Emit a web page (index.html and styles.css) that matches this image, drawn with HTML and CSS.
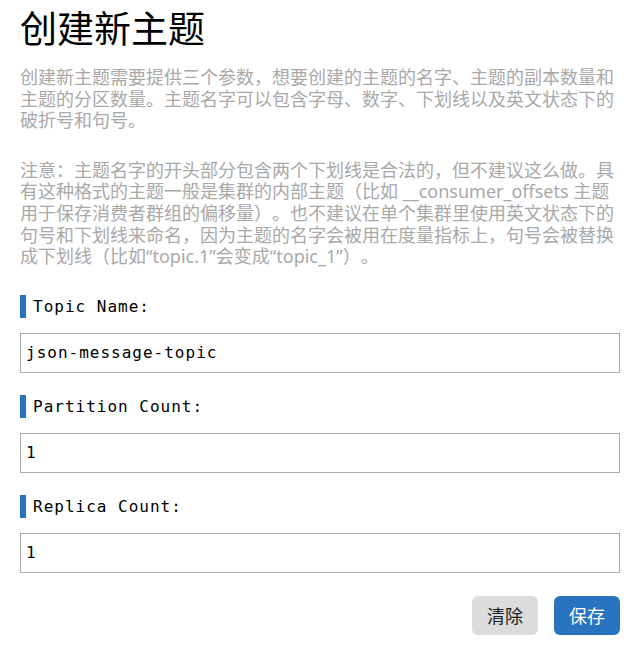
FILE: index.html
```html
<!DOCTYPE html>
<html lang="zh-CN">
<head>
<meta charset="utf-8">
<title>创建新主题</title>
<link rel="stylesheet" href="styles.css">
</head>
<body>
<div class="page">
  <h1 class="title">创建新主题</h1>
  <p class="desc">创建新主题需要提供三个参数，想要创建的主题的名字、主题的副本数量和主题的分区数量。主题名字可以包含字母、数字、下划线以及英文状态下的破折号和句号。</p>
  <p class="desc desc-note">注意：主题名字的开头部分包含两个下划线是合法的，但不建议这么做。具有这种格式的主题一般是集群的内部主题（比如 __consumer_offsets 主题用于保存消费者群组的偏移量）。也不建议在单个集群里使用英文状态下的句号和下划线来命名，因为主题的名字会被用在度量指标上，句号会被替换成下划线（比如“topic.1”会变成“topic_1”）。</p>

  <form class="form">
    <div class="field">
      <label class="label" for="name">Topic Name:</label>
      <input class="input" id="name" type="text" value="json-message-topic">
    </div>
    <div class="field">
      <label class="label" for="part">Partition Count:</label>
      <input class="input" id="part" type="text" value="1">
    </div>
    <div class="field">
      <label class="label" for="rep">Replica Count:</label>
      <input class="input" id="rep" type="text" value="1">
    </div>
    <div class="actions">
      <button type="button" class="btn btn-clear">清除</button>
      <button type="button" class="btn btn-save">保存</button>
    </div>
  </form>
</div>
</body>
</html>
```

FILE: styles.css
```css
html, body {
  margin: 0;
  padding: 0;
  background: #fff;
}

.page {
  width: 600px;
  padding: 0 16px 0 20px;
  font-family: "Segoe UI", "Noto Sans", "Noto Sans CJK SC", sans-serif;
  text-spacing-trim: space-all;
}

.title {
  margin: 0;
  font-size: 37px;
  line-height: 55px;
  font-weight: 400;
  color: #000;
  font-family: "Noto Sans CJK SC", sans-serif;
}

.desc {
  margin: 12px 0 0;
  font-size: 18px;
  line-height: 21.6px;
  color: #a9a9a9;
}

.desc-note {
  margin-top: 28px;
}

.form {
  margin-top: 27px;
  display: flex;
  flex-direction: column;
  gap: 22px;
}

.field {
  display: flex;
  flex-direction: column;
  gap: 15px;
}

.label {
  display: block;
  border-left: 6px solid #2874c0;
  padding-left: 7px;
  height: 23px;
  line-height: 23px;
  font-family: "DejaVu Sans Mono", monospace;
  font-size: 16px;
  letter-spacing: 1px;
  color: #000;
}

.input {
  box-sizing: border-box;
  width: 600px;
  height: 40px;
  margin: 0;
  padding: 0 5px;
  border: 1px solid #aaa;
  font-family: "DejaVu Sans Mono", monospace;
  font-size: 16px;
  letter-spacing: 1px;
  color: #000;
  outline: none;
}

.actions {
  display: flex;
  justify-content: flex-end;
  gap: 16px;
  margin-top: 1px;
}

.btn {
  height: 39px;
  padding: 0 15px;
  border: none;
  border-radius: 6px;
  font-family: "Noto Sans CJK SC", sans-serif;
  font-size: 18px;
  cursor: pointer;
}

.btn-clear {
  background: #dcdcdc;
  color: #222;
}

.btn-save {
  background: #2874c0;
  color: #fff;
}
```
